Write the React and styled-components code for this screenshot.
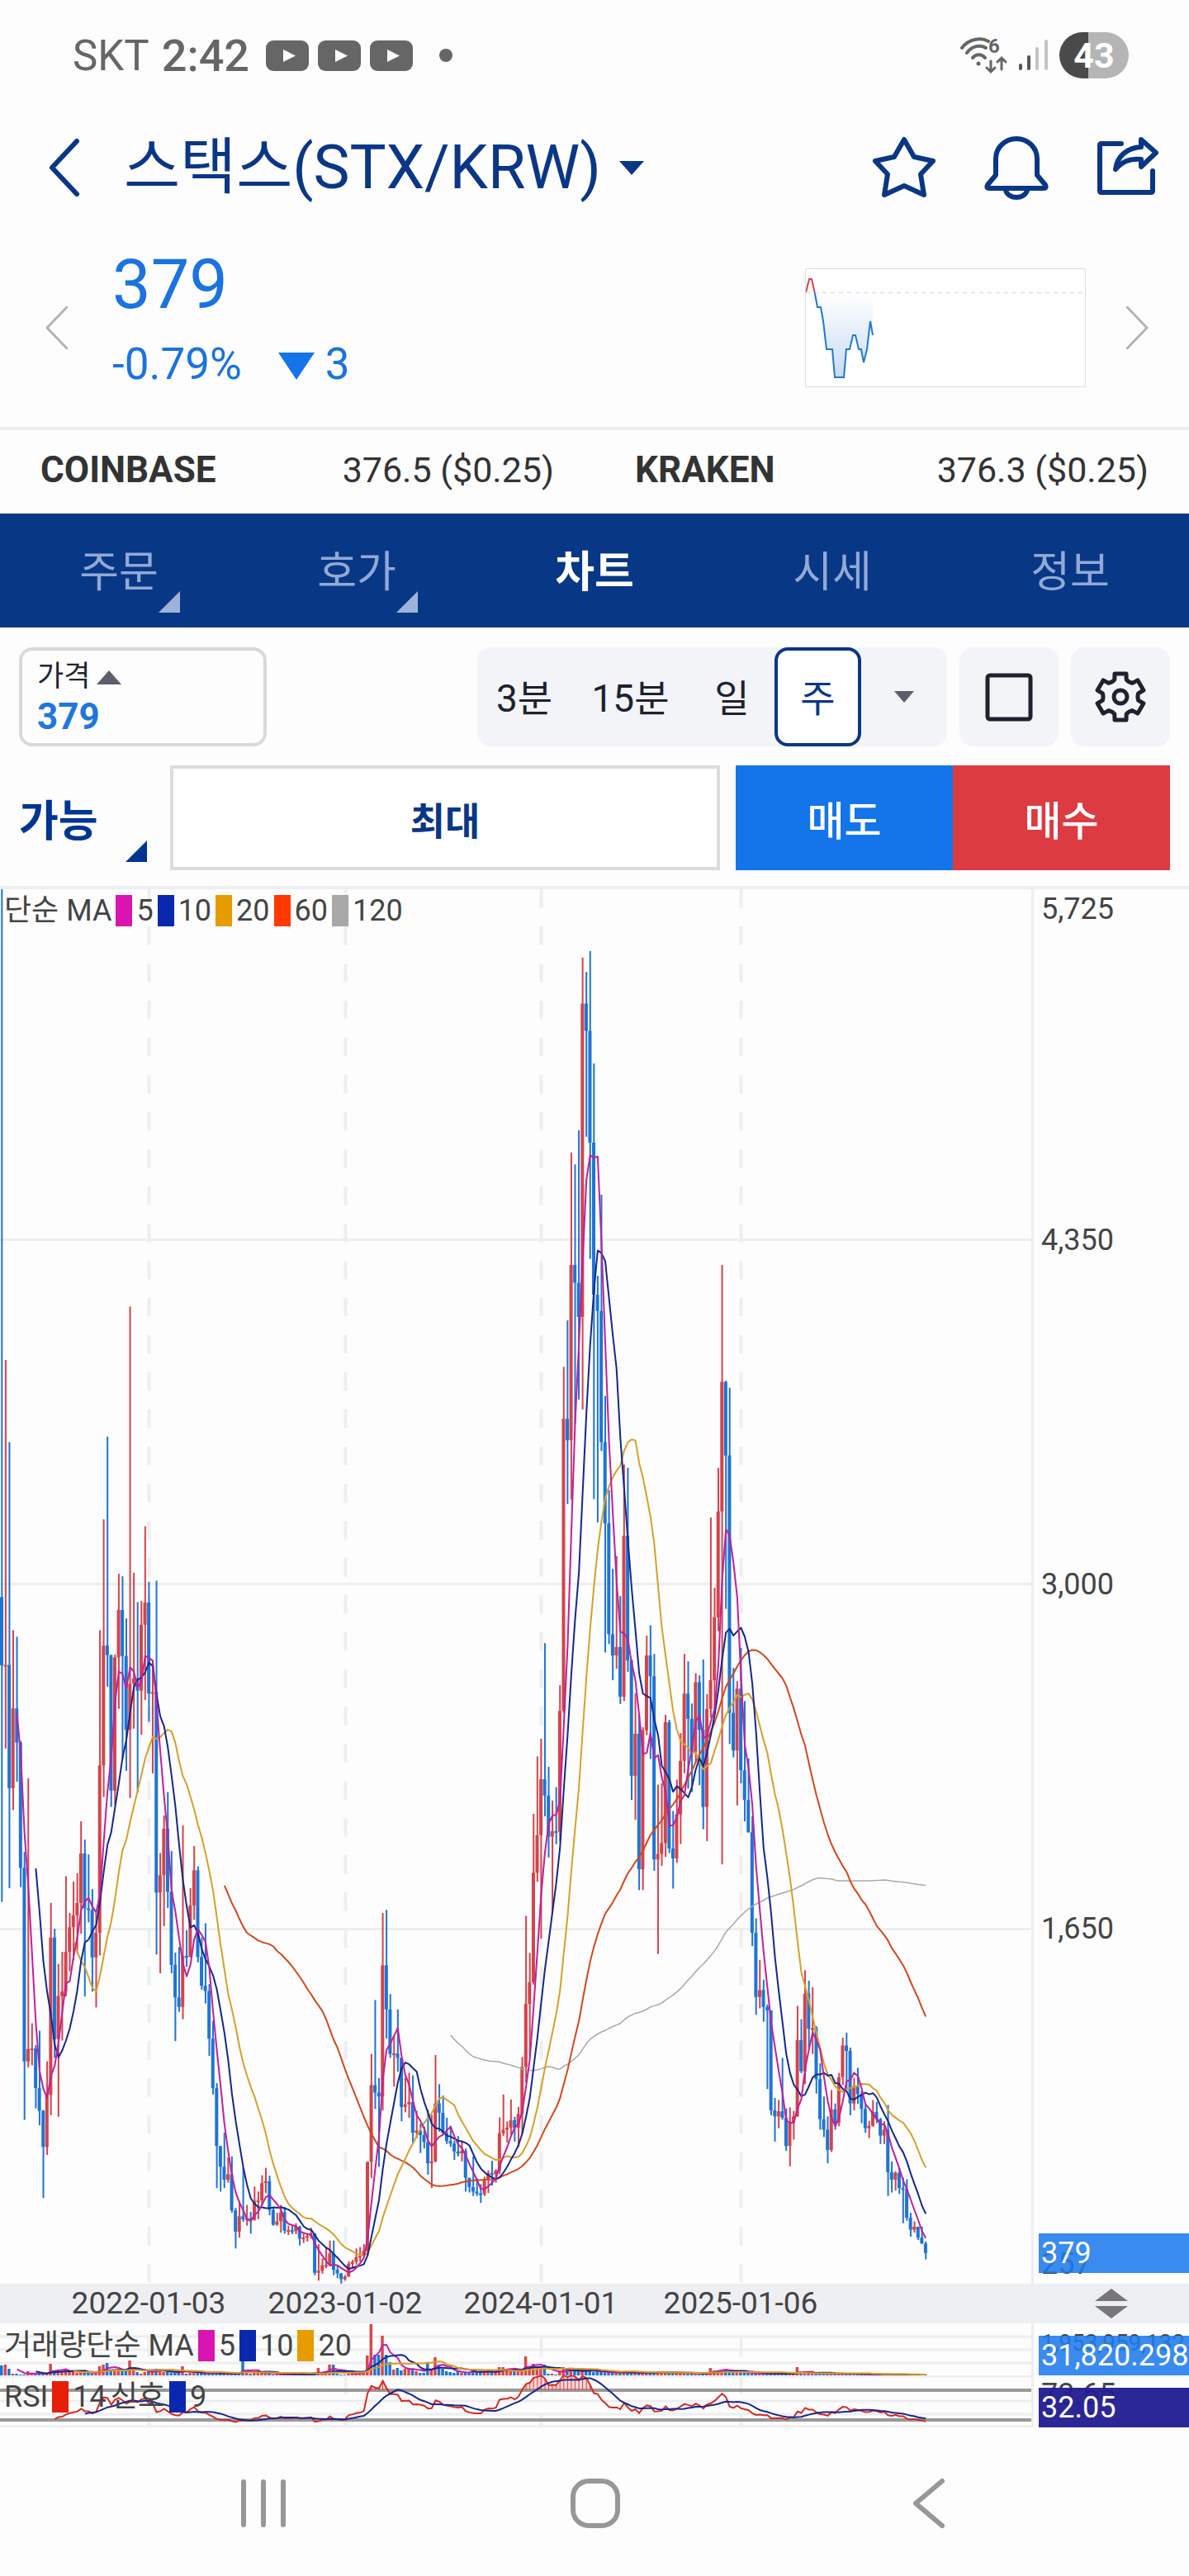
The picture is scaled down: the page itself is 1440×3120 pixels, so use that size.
import React from "react";
import styled, { createGlobalStyle, css } from "styled-components";

const GlobalStyle = createGlobalStyle`
  *, *::before, *::after { box-sizing: border-box; }
  body {
    margin: 0;
    background: #fdfdfd;
    font-family: Roboto, "Noto Sans CJK KR", sans-serif;
    color: #333;
  }
  button {
    font: inherit;
    color: inherit;
    background: none;
    border: 0;
    padding: 0;
    cursor: pointer;
  }
  svg { display: block; flex: none; }
`;

const NAVY = "#0a3785";
const UP = "#d2444c";
const DOWN = "#1f74d4";
const GRID = "#edeef0";

/* ---------- chart data ---------- */

// Weekly candles as [high, low, close] levels; a candle opens at the previous close.
const FIRST_OPEN = 124;
const CANDLES = [
  [-1306, 740, 262], [-355, 430, 261], [-189, 712, 510], [191, 554, 349], [204, 497, 418],
  [415, 710, 671], [639, 1180, 1062], [490, 1074, 1037], [985, 1070, 1036], [1029, 1157, 1116],
  [1000, 1191, 1162], [1160, 1338, 1235], [1062, 1251, 1130], [742, 1171, 812], [794, 1055, 1017],
  [865, 1174, 930], [841, 1020, 921], [688, 931, 841], [762, 880, 791], [699, 858, 767],
  [682, 845, 742], [577, 804, 642], [614, 931, 753], [644, 781, 756], [714, 921, 852],
  [762, 953, 802], [191, 848, 464], [-33, 528, 222], [-200, 305, 241], [241, 548, 515],
  [240, 543, 246], [77, 350, 150], [82, 450, 243], [167, 475, 392], [-463, 530, 299],
  [75, 390, 288], [134, 518, 313], [132, 402, 180], [-19, 332, 135], [93, 376, 319],
  [252, 480, 316], [91, 846, 721], [641, 884, 686], [565, 789, 592], [518, 752, 719],
  [637, 884, 867], [842, 1021, 933], [831, 962, 952], [585, 977, 849], [797, 871, 851],
  [712, 851, 747], [627, 776, 676], [668, 862, 851], [812, 917, 909], [783, 945, 920],
  [906, 1051, 1016], [980, 1129, 1116], [1106, 1318, 1233], [1233, 1325, 1275], [1206, 1318, 1301],
  [1256, 1307, 1290], [1254, 1368, 1363], [1358, 1440, 1406], [1345, 1418, 1375], [1277, 1386, 1381],
  [1352, 1394, 1379], [1366, 1410, 1382], [1315, 1384, 1344], [1325, 1381, 1343], [1292, 1352, 1308],
  [1277, 1328, 1304], [1293, 1373, 1362], [1356, 1394, 1392], [1368, 1394, 1385], [1352, 1408, 1367],
  [1356, 1410, 1404], [1394, 1413, 1403], [1394, 1411, 1405], [1389, 1411, 1396], [1394, 1434, 1420],
  [1408, 1429, 1418], [1410, 1426, 1415], [1398, 1420, 1410], [1410, 1494, 1489], [1431, 1505, 1485],
  [1460, 1491, 1474], [1437, 1480, 1473], [1424, 1476, 1450], [1424, 1494, 1483], [1473, 1500, 1490],
  [1490, 1511, 1502], [1494, 1505, 1497], [1466, 1497, 1471], [1463, 1480, 1467], [1440, 1473, 1458],
  [1437, 1466, 1455], [1431, 1455, 1445], [1265, 1455, 1265], [1047, 1298, 1110], [938, 1158, 1125],
  [1096, 1275, 1133], [762, 1161, 868], [756, 1016, 957], [926, 1055, 1047], [1010, 1113, 1046],
  [957, 1083, 1055], [1055, 1183, 1154], [1094, 1165, 1149], [1085, 1176, 1144], [1090, 1229, 1206],
  [1162, 1217, 1202], [1188, 1247, 1211], [1194, 1238, 1225], [1160, 1291, 1268], [1170, 1318, 1264],
  [1049, 1266, 1147], [1108, 1204, 1166], [1131, 1210, 1207], [1176, 1229, 1223], [1192, 1235, 1228],
  [1222, 1261, 1244], [1213, 1254, 1248], [1222, 1264, 1243], [1238, 1325, 1297], [1298, 1327, 1316],
  [1254, 1334, 1325], [1298, 1334, 1329], [1310, 1348, 1330], [1295, 1334, 1300], [1282, 1328, 1288],
  [1263, 1313, 1290], [1280, 1307, 1283], [1175, 1290, 1207], [1129, 1213, 1200], [1183, 1226, 1196],
  [1139, 1210, 1181], [1174, 1224, 1196], [1154, 1235, 1168], [1053, 1208, 1073], [768, 1105, 946],
  [843, 1050, 902], [562, 907, 681], [446, 699, 605], [410, 814, 492], [217, 567, 525],
  [467, 650, 608], [535, 760, 597], [508, 623, 598], [302, 617, 354], [-341, 358, -236],
  [-435, -64, -193], [-774, -73, -547], [-750, -225, -511], [-819, -275, -442], [-1168, -255, -1075],
  [-1139, -806, -1020], [-1181, -559, -794], [-954, -74, -487], [-525, -27, -454], [-689, -171, -189],
  [-282, 236, -25], [-92, 219, 199], [67, 292, 242], [41, 269, 225], [122, 340, 325],
  [-144, 334, 0], [-137, 275, 252], [250, 534, 485], [318, 574, 400], [360, 716, 674],
  [387, 716, 393], [202, 403, 242], [181, 451, 284], [239, 677, 654], [503, 845, 643],
  [500, 667, 621], [362, 649, 377], [372, 641, 632], [556, 713, 652], [493, 661, 563],
  [399, 623, 455], [239, 480, 319], [254, 511, 370], [339, 518, 438], [278, 458, 296],
  [282, 504, 392], [250, 593, 548], [320, 617, 350], [-37, 368, 292], [105, 355, 165],
  [-137, 193, -49], [-547, 664, -311], [-313, 148, -162], [-299, 421, 358], [267, 448, 434],
  [294, 545, 309], [227, 500, 474], [334, 577, 534], [450, 600, 599], [567, 829, 802],
  [773, 968, 932], [857, 955, 918], [897, 982, 952], [947, 1118, 959], [959, 1171, 1161],
  [1136, 1224, 1173], [1140, 1197, 1163], [1055, 1180, 1176], [1157, 1243, 1233], [1155, 1274, 1185],
  [1162, 1220, 1173], [950, 1174, 1019], [977, 1086, 1082], [878, 1108, 925], [899, 1034, 996],
  [912, 1047, 995], [991, 1127, 1098], [1066, 1200, 1179], [1133, 1215, 1200], [1173, 1268, 1241],
  [1120, 1245, 1159], [1147, 1200, 1186], [1085, 1193, 1094], [1014, 1110, 1030], [1004, 1120, 1041],
  [1034, 1171, 1147], [1095, 1161, 1112], [1075, 1148, 1128], [1122, 1187, 1158], [1150, 1206, 1197],
  [1182, 1217, 1192], [1140, 1194, 1164], [1144, 1187, 1179], [1176, 1229, 1212], [1183, 1229, 1200],
  [1150, 1334, 1286], [1264, 1327, 1301], [1284, 1323, 1287], [1278, 1330, 1318], [1297, 1389, 1320],
  [1300, 1384, 1378], [1368, 1416, 1402], [1385, 1408, 1396], [1396, 1423, 1418], [1396, 1431, 1430],
  [1426, 1462, 1449],
];

const VOLUMES = [
  12, 13, 8, 2, 2, 1, 1, 5, 2, 2, 2, 3, 2, 14, 6, 5, 5, 7, 5, 4,
  3, 4, 4, 3, 2, 2, 11, 13, 15, 6, 5, 6, 5, 6, 18, 6, 4, 2, 4, 6,
  5, 8, 6, 4, 4, 3, 3, 3, 11, 2, 3, 3, 3, 2, 2, 3, 3, 2, 2, 2,
  2, 2, 2, 3, 19, 4, 2, 3, 3, 3, 3, 2, 1, 1, 1, 1, 2, 1, 1, 2,
  1, 1, 1, 4, 9, 3, 4, 13, 13, 2, 1, 1, 2, 3, 3, 3, 3, 24, 62, 25,
  25, 48, 25, 16, 7, 9, 6, 8, 9, 7, 5, 3, 3, 15, 7, 22, 13, 8, 5, 4,
  3, 6, 3, 3, 3, 8, 3, 5, 5, 5, 4, 4, 10, 10, 8, 7, 6, 6, 8, 23,
  9, 14, 10, 9, 13, 2, 2, 1, 6, 10, 7, 6, 5, 5, 8, 6, 5, 4, 5, 4,
  3, 4, 3, 4, 3, 3, 4, 3, 3, 3, 4, 3, 3, 3, 5, 3, 3, 4, 3, 3,
  3, 3, 3, 2, 2, 1, 2, 3, 9, 6, 6, 7, 7, 5, 4, 4, 3, 3, 3, 2,
  2, 2, 2, 2, 2, 2, 2, 2, 2, 2, 2, 10, 3, 3, 3, 2, 2, 3, 2, 2,
  2, 2, 2, 2, 2, 2, 2, 1, 1, 1, 1, 1, 1, 1, 1, 2, 1, 1, 1, 1,
  1, 1, 1, 1, 1, 1,
];

const PLOT_W = 1252;
const PLOT_H = 1689;
const PANE_H = 63;
const STEP = 4.567;

const xAt = (i) => 2.3 + i * STEP;
const yAt = (level) => level / 1.668 + 783;
const closes = CANDLES.map((c) => c[2]);
const opens = [FIRST_OPEN, ...closes.slice(0, -1)];

const average = (list, span) =>
  list.map((_, i) => {
    if (i < span - 1) return null;
    let sum = 0;
    for (let k = i - span + 1; k <= i; k += 1) sum += list[k];
    return sum / span;
  });

const relativeStrength = (list, span) => {
  let gain = 0;
  let loss = 0;
  return list.map((level, i) => {
    if (i === 0) return null;
    const rise = list[i - 1] - level;
    const g = Math.max(rise, 0);
    const l = Math.max(-rise, 0);
    if (i <= span) {
      gain += g / span;
      loss += l / span;
      if (i < span) return null;
    } else {
      gain = (gain * (span - 1) + g) / span;
      loss = (loss * (span - 1) + l) / span;
    }
    return (100 * gain) / (gain + loss);
  });
};

const toPath = (list, y) => {
  let d = "";
  list.forEach((v, i) => {
    if (v !== null) d += `${d ? "L" : "M"}${xAt(i).toFixed(1)} ${y(v).toFixed(1)}`;
  });
  return d;
};

const PRICE_LINES = [
  [120, "#a8a8a8"],
  [60, "#d4481c"],
  [20, "#d6a02c"],
  [10, "#14288c"],
  [5, "#c01f9c"],
];
const YEAR_X = [180, 418, 655, 897];
const YEARS = ["2022-01-03", "2023-01-02", "2024-01-01", "2025-01-06"];

const rsi = relativeStrength(closes, 14);
const rsiSignal = rsi.map((_, i) => {
  if (i < 22) return null;
  return rsi.slice(i - 8, i + 1).reduce((a, b) => a + b, 0) / 9;
});
const rsiY = (v) => 18 + (70 - v) * 0.9;
const volY = (v) => PANE_H - v;

/* ---------- status bar ---------- */

const StatusBar = styled.header`
  display: flex;
  align-items: center;
  justify-content: space-between;
  height: 134px;
  padding: 0 73px 0 88px;
  color: #666;
  font-size: 51px;
`;
const StatusGroup = styled.div`
  display: flex;
  align-items: center;
  gap: ${(p) => p.$gap}px;
`;
const Clock = styled.span`
  margin: 0 9px 0 4px;
  font-size: 54px;
  font-weight: 500;
`;
const Battery = styled.span`
  width: 84px;
  height: 56px;
  border-radius: 28px;
  background: linear-gradient(90deg, #4a4a4a 42%, #b5b5b5 42%);
  color: #fff;
  font-size: 43px;
  line-height: 56px;
  font-weight: 700;
  text-align: center;
`;

const VideoIcon = () => (
  <svg width="52" height="37" viewBox="0 0 52 37" aria-hidden="true">
    <rect width="52" height="37" rx="9" fill="#666" />
    <path d="M21 11L36 18.500L21 26Z" fill="#fff" />
  </svg>
);

const WifiIcon = () => (
  <svg width="58" height="52" viewBox="0 -4 58 52" fill="none" stroke="#666" strokeWidth="4" strokeLinecap="round">
    <path d="M2 13C10 2 25 0 34 5M8 19C14 10 25 9 31 13M15 25C19 20 26 20 30 25" />
    <circle cx="22" cy="32" r="2.500" fill="#666" stroke="none" />
    <path d="M37 29V41M32 37L37 42L42 37M50 39V25M45 30L50 25L55 30" strokeWidth="3" />
    <text x="34" y="19" fontSize="24" fontWeight="700" fill="#666" stroke="none" fontFamily="Roboto, sans-serif">6</text>
  </svg>
);

const SignalIcon = () => (
  <svg width="36" height="40" viewBox="0 0 36 40" strokeWidth="4" strokeLinecap="round">
    <path d="M2 32V36M12 22V36" stroke="#555" />
    <path d="M22 12V36M33 3V36" stroke="#c4c4c4" />
  </svg>
);

/* ---------- title bar ---------- */

const TitleBar = styled.div`
  display: flex;
  align-items: center;
  height: 138px;
  padding: 0 31px 0 50px;
  color: ${NAVY};
`;
const TitleButton = styled.button`
  display: flex;
  align-items: center;
  gap: 22px;
  margin: 0 auto 0 44px;
`;
const Title = styled.h1`
  margin: 0;
  font-size: 74px;
  line-height: 88px;
  font-weight: 400;
  white-space: nowrap;
`;
const Actions = styled.div`
  display: flex;
  gap: 52px;
`;

const LineIcon = ({ w = 84, h = 84, width = 6, color = NAVY, children }) => (
  <svg width={w} height={h} viewBox={`0 0 ${w} ${h}`} fill="none" stroke={color} strokeWidth={width} strokeLinecap="round" strokeLinejoin="round" aria-hidden="true">
    {children}
  </svg>
);

/* ---------- quote ---------- */

const Quote = styled.section`
  display: flex;
  align-items: center;
  height: 249px;
  padding: 4px 49px 0 55px;
  border-bottom: 4px solid #eee;
  color: #1a73e0;
`;
const Prices = styled.div`
  margin: 0 auto 0 54px;
  padding-bottom: 8px;
`;
const Price = styled.div`
  font-size: 83px;
  line-height: 96px;
`;
const Change = styled.div`
  display: flex;
  align-items: center;
  font-size: 53px;
  line-height: 96px;

  svg { margin: 6px 13px 0 44px; }
`;
const Spark = styled.div`
  width: 340px;
  height: 144px;
  margin-right: 49px;
  border: 1px solid #ddd;
  background: #fff;
`;

const SPARK_DOWN =
  "10.800 29L14 46H18L21 63L25 97H32L35 131H46L49 97H53L57 80H60L64 97H67L70 113L74 97L78 63L81 80";

const Sparkline = () => (
  <svg width="338" height="142" viewBox="0 0 338 142" fill="none" role="img" aria-label="당일 시세">
    <defs>
      <linearGradient id="sparkFill" x1="0" y1="0" x2="0" y2="1">
        <stop offset="0" stopColor="#1f74d4" stopOpacity="0" />
        <stop offset="1" stopColor="#1f74d4" stopOpacity="0.25" />
      </linearGradient>
    </defs>
    <path d={`M${SPARK_DOWN}V29Z`} fill="url(#sparkFill)" />
    <path d="M0 28.500H338" stroke="#e6e6e6" strokeWidth="2" strokeDasharray="5 5" />
    <path d="M0 28L4 12H7L10.800 29" stroke="#d9434c" strokeWidth="2" />
    <path d={`M${SPARK_DOWN}`} stroke="#2079d4" strokeWidth="2" />
  </svg>
);

/* ---------- exchanges and tabs ---------- */

const Exchanges = styled.dl`
  display: grid;
  grid-template-columns: 1fr 1fr;
  height: 101px;
  margin: 0;
  padding-bottom: 6px;
  font-size: 43px;
`;
const Exchange = styled.div`
  display: flex;
  align-items: center;
  justify-content: space-between;
  padding: 0 49px;

  dt {
    font-size: 44px;
    font-weight: 700;
  }
  dd { margin: 0; }
`;

const Tabs = styled.nav`
  display: grid;
  grid-template-columns: repeat(5, 1fr);
  background: #083785;
`;
const Tab = styled.a`
  position: relative;
  height: 138px;
  padding-top: 6px;
  line-height: 132px;
  text-align: center;
  text-decoration: none;
  font-size: 52px;
  color: #92a9d6;
  ${(p) => p.$active && css`
    color: #fff;
    font-weight: 700;
  `}
`;
const Corner = styled.span`
  width: 26px;
  height: 26px;
  background: ${(p) => p.$color};
  clip-path: polygon(100% 0, 100% 100%, 0 100%);
  ${(p) => p.$badge && css`
    position: absolute;
    right: 70px;
    bottom: 18px;
  `}
`;

/* ---------- controls ---------- */

const Controls = styled.div`
  display: flex;
  gap: 15px;
  padding: 24px 23px 0;
`;
const PriceBox = styled.button`
  width: 300px;
  height: 120px;
  margin-right: auto;
  padding: 0 18px;
  border: 4px solid #d9d9dc;
  border-radius: 16px;
  text-align: left;
`;
const PriceLabel = styled.span`
  display: flex;
  align-items: center;
  gap: 8px;
  font-size: 35px;
  line-height: 48px;
  color: #23252f;
`;
const PriceValue = styled.strong`
  display: block;
  font-size: 44px;
  line-height: 48px;
  color: #1f77dc;
`;
const Frames = styled.div`
  display: flex;
  border-radius: 16px;
  background: #f2f4f7;
`;
const Frame = styled.button`
  width: ${(p) => p.$w}px;
  height: 120px;
  padding-bottom: 5px;
  border-radius: 16px;
  font-size: 46px;
  color: #1e2130;
  ${(p) => p.$active && css`
    border: 4px solid ${NAVY};
    background: #fff;
    color: ${NAVY};
  `}

  svg { margin: 4px auto 0; }
`;
const IconButton = styled.button`
  display: grid;
  place-items: center;
  width: 120px;
  height: 120px;
  border-radius: 16px;
  background: #f2f4f7;
`;

const OrderRow = styled.div`
  display: flex;
  height: 127px;
  margin: 23px 23px 19px;
`;
const Available = styled.button`
  display: flex;
  align-items: center;
  justify-content: space-between;
  width: 155px;
  margin-right: 28px;
  font-size: 52px;
  font-weight: 700;
  color: #003591;

  ${Corner} {
    align-self: flex-end;
    margin-bottom: 10px;
  }
`;
const Maximum = styled.button`
  flex: 1;
  margin-right: 19px;
  border: 4px solid #dcdcdc;
  background: #fff;
  font-size: 46px;
  font-weight: 700;
  color: ${NAVY};
`;
const Trade = styled.button`
  width: 263px;
  font-size: 49px;
  font-weight: 500;
  color: #fff;
  background: ${(p) => p.$color};
`;

const gearPath = Array.from({ length: 6 }, (_, n) => {
  const a = n * 60 - 90;
  return [[-27, 21], [-19, 22], [-14, 29], [14, 29], [19, 22], [27, 21]]
    .map(([da, r]) => {
      const t = ((a + da) * Math.PI) / 180;
      return `${(32 + r * Math.cos(t)).toFixed(1)} ${(32 + r * Math.sin(t)).toFixed(1)}`;
    })
    .join("L");
}).join("L");

/* ---------- chart ---------- */

const Chart = styled.section`
  border-top: 4px solid ${GRID};
  font-size: 36px;
  color: #444;
`;
const Pane = styled.div`
  position: relative;
  display: grid;
  grid-template-columns: minmax(0, 1fr) 188px;
  height: ${(p) => p.$h}px;

  > svg {
    width: 100%;
    height: 100%;
  }
`;
const Axis = styled.div`
  position: relative;
  overflow: hidden;
`;
const AxisLabel = styled.span`
  position: absolute;
  left: 9px;
  top: ${(p) => p.$y}px;
  font-size: ${(p) => (p.$small ? 28 : 36)}px;
  line-height: 48px;
  transform: translateY(-50%);
  white-space: nowrap;
`;
const AxisTag = styled(AxisLabel)`
  left: 6px;
  right: 0;
  padding-left: 3px;
  color: #fff;
  background: ${(p) => p.$color};
`;
const Legend = styled.div`
  position: absolute;
  left: 5px;
  top: ${(p) => p.$top}px;
  display: flex;
  align-items: center;
  gap: 5px;
  height: 38px;
  line-height: 38px;
  white-space: nowrap;
`;
const Swatch = styled.i`
  width: 20px;
  height: 38px;
  background: ${(p) => p.$color};
`;
const DateAxis = styled.div`
  position: relative;
  height: 48px;
  background: #eeeff3;
  font-size: 37px;
  line-height: 48px;
`;
const DateLabel = styled.time`
  position: absolute;
  transform: translateX(-50%);
`;
const ResizeHandle = styled.button`
  position: absolute;
  right: 74px;
  top: 6px;
`;

const Series = ({ items }) =>
  items.map(([color, label]) => (
    <React.Fragment key={color + label}>
      <Swatch $color={color} />
      <span>{label}</span>
    </React.Fragment>
  ));

const PriceChart = () => (
  <svg viewBox={`0 0 ${PLOT_W} ${PLOT_H}`} preserveAspectRatio="none" fill="none" role="img" aria-label="주봉 차트">
    {YEAR_X.map((x) => (
      <path key={x} d={`M${x + 0.5} 0V${PLOT_H}`} stroke={GRID} strokeWidth="4" strokeDasharray="22.500 22.500" />
    ))}
    {[424, 841, 1259].map((y) => (
      <path key={y} d={`M0 ${y + 0.5}H${PLOT_W}`} stroke={GRID} strokeWidth="3" />
    ))}
    <path d={`M${PLOT_W - 1} 0V${PLOT_H}`} stroke={GRID} strokeWidth="4" />
    {CANDLES.map(([high, low, close], i) => {
      const open = opens[i];
      const color = close > open ? DOWN : UP;
      const x = xAt(i);
      const top = yAt(Math.min(open, close));
      return (
        <g key={i} fill={color}>
          <rect x={x - 1} y={yAt(high)} width="2" height={yAt(low) - yAt(high)} />
          <rect x={x - 2.3} y={top} width="4" height={Math.max(2, yAt(Math.max(open, close)) - top)} />
        </g>
      );
    })}
    {PRICE_LINES.map(([span, color]) => (
      <path key={span} d={toPath(average(closes, span), yAt)} stroke={color} strokeWidth={span > 60 ? 1.5 : 2} strokeLinejoin="round" />
    ))}
  </svg>
);

const VolumeChart = () => (
  <svg viewBox={`0 0 ${PLOT_W} ${PANE_H}`} preserveAspectRatio="none" fill="none" role="img" aria-label="거래량">
    {[16, 32, 48].map((y) => (
      <path key={y} d={`M0 ${y}H${PLOT_W}`} stroke={GRID} strokeWidth="3" />
    ))}
    {YEAR_X.map((x) => (
      <path key={x} d={`M${x + 0.5} 18V${PANE_H}`} stroke={GRID} strokeWidth="4" strokeDasharray="22.500 22.500" />
    ))}
    <path d={`M${PLOT_W - 1} 0V${PANE_H}`} stroke={GRID} strokeWidth="4" />
    {VOLUMES.map((v, i) => (
      <rect key={i} x={xAt(i) - 2.3} y={volY(v)} width="3.500" height={v} fill={closes[i] > opens[i] ? DOWN : "#d84848"} />
    ))}
    {[[5, "#c020b0"], [10, "#14288c"], [20, "#e09a1c"]].map(([span, color]) => (
      <path key={span} d={toPath(average(VOLUMES, span), volY)} stroke={color} strokeWidth="2" />
    ))}
  </svg>
);

const RsiChart = () => (
  <svg viewBox={`0 0 ${PLOT_W} ${PANE_H}`} preserveAspectRatio="none" fill="none" role="img" aria-label="RSI">
    {[1, 31, 47, 62].map((y) => (
      <path key={y} d={`M0 ${y}H${PLOT_W}`} stroke={GRID} strokeWidth="3" />
    ))}
    {YEAR_X.map((x) => (
      <path key={x} d={`M${x + 0.5} 0V${PANE_H}`} stroke={GRID} strokeWidth="4" strokeDasharray="22.500 22.500" />
    ))}
    <path d={`M0 18H${PLOT_W}M0 54H${PLOT_W}`} stroke="#999" strokeWidth="4" />
    <path d={`M${PLOT_W - 1} 0V${PANE_H}`} stroke={GRID} strokeWidth="4" />
    {rsi.map((v, i) =>
      v > 70 ? (
        <g key={i}>
          <rect x={xAt(i) - 2.3} y={rsiY(v)} width={STEP} height={18 - rsiY(v)} fill="#ff5a5a" opacity="0.25" />
          <path d={`M${xAt(i)} ${rsiY(v)}V18`} stroke="#e04444" strokeWidth="1" />
        </g>
      ) : null
    )}
    <path d={toPath(rsi, rsiY)} stroke="#d42a20" strokeWidth="2" />
    <path d={toPath(rsiSignal, rsiY)} stroke="#14288c" strokeWidth="2" />
  </svg>
);

/* ---------- system navigation ---------- */

const SystemNav = styled.footer`
  display: grid;
  grid-template-columns: repeat(3, 1fr);
  height: 180px;
  padding: 4px 116px 0 118px;
  place-items: center;
`;

export default function App() {
  return (
    <>
      <GlobalStyle />
      <StatusBar>
        <StatusGroup $gap={11}>
          <span>SKT</span>
          <Clock>2:42</Clock>
          <VideoIcon />
          <VideoIcon />
          <VideoIcon />
          <svg width="60" height="16" viewBox="0 0 60 16" aria-hidden="true">
            <circle cx="29" cy="8" r="8" fill="#666" />
          </svg>
        </StatusGroup>
        <StatusGroup $gap={13}>
          <WifiIcon />
          <SignalIcon />
          <Battery>43</Battery>
        </StatusGroup>
      </StatusBar>

      <TitleBar>
        <button type="button" aria-label="뒤로">
          <LineIcon w={56}><path d="M43 10L13 42L43 74" /></LineIcon>
        </button>
        <TitleButton type="button">
          <Title>스택스(STX/KRW)</Title>
          <svg width="30" height="17" viewBox="0 0 30 17" fill={NAVY}><path d="M0 0H30L15 17Z" /></svg>
        </TitleButton>
        <Actions>
          <button type="button" aria-label="관심 종목">
            <LineIcon><path d="M42 8L54 29L77 34L62 50L66 75L42 64L18 75L22 50L7 34L30 29Z" /></LineIcon>
          </button>
          <button type="button" aria-label="알림">
            <LineIcon>
              <path d="M17 51V31A25 24 0 0 1 67 31V51L77 63Q79 67 75 67H9Q5 67 7 63Z" />
              <path d="M29 68A13 10 0 0 0 55 68" />
            </LineIcon>
          </button>
          <button type="button" aria-label="공유">
            <LineIcon>
              <path d="M33 13H9Q7 13 7 15V70Q7 72 9 72H69Q71 72 71 70V46" />
              <path d="M57 8L75 24L57 41V32C42 31 34 35 26 44C28 28 40 18 57 17Z" />
            </LineIcon>
          </button>
        </Actions>
      </TitleBar>

      <Quote>
        <button type="button" aria-label="이전 종목">
          <LineIcon w={27} h={52} width={3} color="#b3b3b3"><path d="M26 1L2 26L26 51" /></LineIcon>
        </button>
        <Prices>
          <Price>379</Price>
          <Change>
            <span>-0.79%</span>
            <svg width="44" height="33" viewBox="0 0 44 33" fill="#1475eb"><path d="M0 0H44L22 33Z" /></svg>
            <span>3</span>
          </Change>
        </Prices>
        <Spark><Sparkline /></Spark>
        <button type="button" aria-label="다음 종목">
          <LineIcon w={27} h={52} width={3} color="#b3b3b3"><path d="M1 1L25 26L1 51" /></LineIcon>
        </button>
      </Quote>

      <Exchanges>
        <Exchange><dt>COINBASE</dt><dd>376.5 ($0.25)</dd></Exchange>
        <Exchange><dt>KRAKEN</dt><dd>376.3 ($0.25)</dd></Exchange>
      </Exchanges>

      <Tabs>
        <Tab href="#order">주문<Corner $badge $color="#9fb3d9" /></Tab>
        <Tab href="#book">호가<Corner $badge $color="#9fb3d9" /></Tab>
        <Tab href="#chart" $active aria-current="page">차트</Tab>
        <Tab href="#quotes">시세</Tab>
        <Tab href="#info">정보</Tab>
      </Tabs>

      <Controls>
        <PriceBox type="button">
          <PriceLabel>
            가격
            <svg width="30" height="17" viewBox="0 0 30 17" fill="#5c5e6a"><path d="M0 17L15 0L30 17Z" /></svg>
          </PriceLabel>
          <PriceValue>379</PriceValue>
        </PriceBox>
        <Frames>
          <Frame type="button" $w={114}>3분</Frame>
          <Frame type="button" $w={143}>15분</Frame>
          <Frame type="button" $w={103}>일</Frame>
          <Frame type="button" $w={105} $active aria-pressed="true">주</Frame>
          <Frame type="button" $w={104} aria-label="주기 더보기">
            <svg width="24" height="14" viewBox="0 0 24 14" fill="#5c5e6a"><path d="M0 0H24L12 14Z" /></svg>
          </Frame>
        </Frames>
        <IconButton type="button" aria-label="전체 화면">
          <LineIcon w={64} h={64} width={5} color="#1e2130"><rect x="6" y="6" width="52" height="53" rx="3" /></LineIcon>
        </IconButton>
        <IconButton type="button" aria-label="차트 설정">
          <LineIcon w={64} h={64} width={5} color="#1e2130">
            <path d={`M${gearPath}Z`} />
            <circle cx="32" cy="32" r="8" />
          </LineIcon>
        </IconButton>
      </Controls>

      <OrderRow>
        <Available type="button">가능<Corner $color="#003591" /></Available>
        <Maximum type="button">최대</Maximum>
        <Trade type="button" $color="#1475eb">매도</Trade>
        <Trade type="button" $color="#dc3b42">매수</Trade>
      </OrderRow>

      <Chart>
        <Pane $h={PLOT_H}>
          <PriceChart />
          <Legend $top={7}>
            <span>단순 MA</span>
            <Series items={[["#d914b0", "5"], ["#0a28ae", "10"], ["#e69b00", "20"], ["#ff3800", "60"], ["#a8a8a8", "120"]]} />
          </Legend>
          <Axis>
            <AxisLabel $y={24}>5,725</AxisLabel>
            <AxisLabel $y={425}>4,350</AxisLabel>
            <AxisLabel $y={842}>3,000</AxisLabel>
            <AxisLabel $y={1259}>1,650</AxisLabel>
            <AxisLabel $y={1665}>257</AxisLabel>
            <AxisTag $y={1652} $color="rgba(30, 123, 237, 0.88)">379</AxisTag>
          </Axis>
        </Pane>
        <DateAxis>
          {YEARS.map((date, i) => (
            <DateLabel key={date} dateTime={date} style={{ left: `${(YEAR_X[i] / 1440) * 100}%` }}>{date}</DateLabel>
          ))}
          <ResizeHandle type="button" aria-label="영역 크기 조절">
            <svg width="40" height="36" viewBox="0 0 40 36" fill="#777"><path d="M0 15L20 0L40 15ZM0 21H40L20 36Z" /></svg>
          </ResizeHandle>
        </DateAxis>
        <Pane $h={PANE_H}>
          <VolumeChart />
          <Legend $top={8}>
            <span>거래량단순 MA</span>
            <Series items={[["#d914b0", "5"], ["#0a28ae", "10"], ["#e69b00", "20"]]} />
          </Legend>
          <Axis>
            <AxisLabel $small $y={24}>1,953,959,132</AxisLabel>
            <AxisTag $y={39} $color="rgba(30, 123, 237, 0.88)">31,820.298</AxisTag>
          </Axis>
        </Pane>
        <Pane $h={PANE_H}>
          <Legend $top={7}>
            <span>RSI</span>
            <Series items={[["#e61e0a", "14"]]} />
            <span>신호</span>
            <Series items={[["#0a28ae", "9"]]} />
          </Legend>
          <RsiChart />
          <Axis>
            <AxisLabel $y={23}>73.65</AxisLabel>
            <AxisTag $y={39} $color="rgba(35, 30, 146, 0.96)">32.05</AxisTag>
          </Axis>
        </Pane>
      </Chart>

      <SystemNav>
        <button type="button" aria-label="최근 앱">
          <LineIcon w={60} h={64} color="#979797"><path d="M6 6V58M30 6V58M54 6V58" /></LineIcon>
        </button>
        <button type="button" aria-label="홈">
          <LineIcon w={64} h={64} color="#979797"><rect x="5" y="5" width="54" height="54" rx="19" /></LineIcon>
        </button>
        <button type="button" aria-label="뒤로 가기">
          <LineIcon w={44} h={64} color="#979797"><path d="M40 5L8 32L40 59" /></LineIcon>
        </button>
      </SystemNav>
    </>
  );
}
